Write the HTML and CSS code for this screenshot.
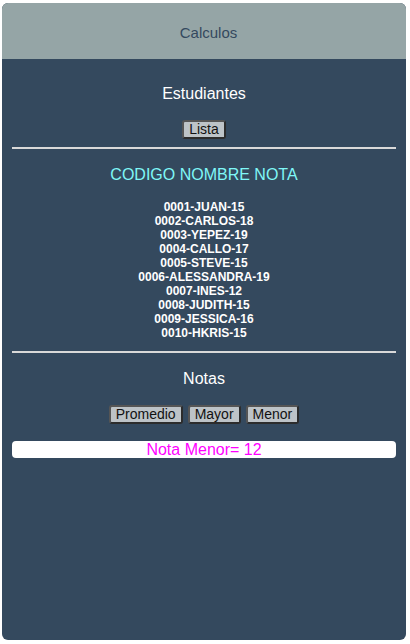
FILE: index.html
```html
<!DOCTYPE html>
<html>
<head>
<meta charset="utf-8">
<link rel="stylesheet" href="styles.css">
</head>
<body>
<div class="card">
  <div class="header">Calculos</div>
  <div class="content">
    <div class="title">Estudiantes</div>
    <div class="btns"><button class="btn">Lista</button></div>
    <div class="rule"></div>
    <div class="cols">CODIGO NOMBRE NOTA</div>
    <div class="list">
      <div>0001-JUAN-15</div>
      <div>0002-CARLOS-18</div>
      <div>0003-YEPEZ-19</div>
      <div>0004-CALLO-17</div>
      <div>0005-STEVE-15</div>
      <div>0006-ALESSANDRA-19</div>
      <div>0007-INES-12</div>
      <div>0008-JUDITH-15</div>
      <div>0009-JESSICA-16</div>
      <div>0010-HKRIS-15</div>
    </div>
    <div class="rule"></div>
    <div class="title notas">Notas</div>
    <div class="btns"><button class="btn">Promedio</button><button class="btn">Mayor</button><button class="btn">Menor</button></div>
    <div class="result">Nota Menor= 12</div>
  </div>
</div>
</body>
</html>
```
FILE: styles.css
```css
html, body {
  margin: 0;
  padding: 0;
  background: #ffffff;
}
body {
  font-family: "Liberation Sans", Arial, sans-serif;
  padding: 3px 4px 4px 2px;
  height: 644px;
  box-sizing: border-box;
}
.card {
  height: 637px;
  border-radius: 6px;
  overflow: hidden;
  background: #34495e;
  display: flex;
  flex-direction: column;
}
.header {
  height: 56px;
  background: #95a5a6;
  color: #34495e;
  font-size: 15px;
  display: flex;
  align-items: center;
  justify-content: center;
  padding-top: 2px;
  padding-left: 9px;
  box-sizing: border-box;
}
.content {
  padding: 0 10px;
  display: flex;
  flex-direction: column;
}
.title {
  color: #ffffff;
  font-size: 16px;
  text-align: center;
  margin-top: 26px;
  line-height: 18px;
}
.btns {
  display: flex;
  justify-content: center;
  gap: 5px;
  margin-top: 17px;
}
.btn {
  font-family: "Liberation Sans", Arial, sans-serif;
  font-size: 14px;
  line-height: 15px;
  height: 19px;
  padding: 0 5px;
  background: #bdc3c7;
  color: #111;
  border: 2px solid #2c2c2c;
  border-top-color: #555;
  border-left-color: #555;
  border-radius: 3px;
}
.rule {
  height: 2px;
  background: #d9d9d9;
  margin-top: 8px;
}
.cols {
  color: #7ff7f7;
  font-size: 16px;
  text-align: center;
  margin-top: 17px;
  line-height: 18px;
}
.list {
  color: #ffffff;
  font-weight: bold;
  font-size: 12px;
  line-height: 14px;
  text-align: center;
  margin-top: 16px;
}
.list + .rule {
  margin-top: 11px;
}
.notas {
  margin-top: 17px;
}
.btns + .result {
  margin-top: 17px;
}
.result {
  background: #ffffff;
  color: #ff00ff;
  font-size: 16px;
  line-height: 17px;
  text-align: center;
  border-radius: 4px;
}
```
